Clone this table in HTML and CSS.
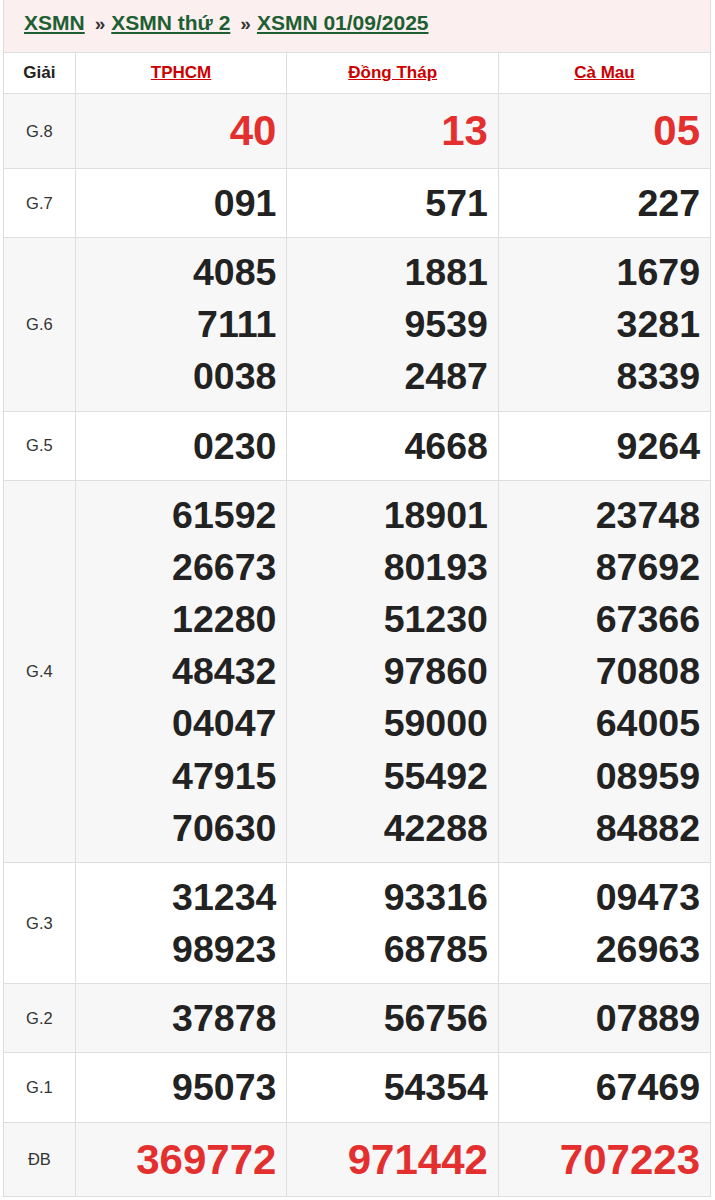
FILE: index.html
```html
<!DOCTYPE html>
<html lang="vi">
<head>
<meta charset="utf-8">
<title>XSMN 01/09/2025</title>
<link rel="stylesheet" href="styles.css">
</head>
<body>
<div class="box">
  <div class="crumbs">
    <a href="#">XSMN</a><span class="sep">»</span><a href="#">XSMN thứ 2</a><span class="sep">»</span><a href="#">XSMN 01/09/2025</a>
  </div>
  <table class="kq">
    <colgroup><col class="c-g"><col class="c-p"><col class="c-p"><col class="c-p"></colgroup>
    <thead>
      <tr><th class="lbl-h">Giải</th><th><a href="#">TPHCM</a></th><th><a href="#">Đồng Tháp</a></th><th><a href="#">Cà Mau</a></th></tr>
    </thead>
    <tbody>
      <tr class="alt"><td class="lbl">G.8</td><td class="num big red"><div>40</div></td><td class="num big red"><div>13</div></td><td class="num big red"><div>05</div></td></tr>
      <tr><td class="lbl">G.7</td><td class="num"><div>091</div></td><td class="num"><div>571</div></td><td class="num"><div>227</div></td></tr>
      <tr class="alt"><td class="lbl">G.6</td><td class="num"><div>4085</div><div>7111</div><div>0038</div></td><td class="num"><div>1881</div><div>9539</div><div>2487</div></td><td class="num"><div>1679</div><div>3281</div><div>8339</div></td></tr>
      <tr><td class="lbl">G.5</td><td class="num"><div>0230</div></td><td class="num"><div>4668</div></td><td class="num"><div>9264</div></td></tr>
      <tr class="alt"><td class="lbl">G.4</td>
        <td class="num"><div>61592</div><div>26673</div><div>12280</div><div>48432</div><div>04047</div><div>47915</div><div>70630</div></td>
        <td class="num"><div>18901</div><div>80193</div><div>51230</div><div>97860</div><div>59000</div><div>55492</div><div>42288</div></td>
        <td class="num"><div>23748</div><div>87692</div><div>67366</div><div>70808</div><div>64005</div><div>08959</div><div>84882</div></td></tr>
      <tr><td class="lbl">G.3</td><td class="num"><div>31234</div><div>98923</div></td><td class="num"><div>93316</div><div>68785</div></td><td class="num"><div>09473</div><div>26963</div></td></tr>
      <tr class="alt"><td class="lbl">G.2</td><td class="num"><div>37878</div></td><td class="num"><div>56756</div></td><td class="num"><div>07889</div></td></tr>
      <tr><td class="lbl">G.1</td><td class="num"><div>95073</div></td><td class="num"><div>54354</div></td><td class="num"><div>67469</div></td></tr>
      <tr class="alt last"><td class="lbl">ĐB</td><td class="num big red"><div>369772</div></td><td class="num big red"><div>971442</div></td><td class="num big red"><div>707223</div></td></tr>
    </tbody>
  </table>
</div>
</body>
</html>
```

FILE: styles.css
```css
html, body {
  margin: 0;
  padding: 0;
  background: #fff;
  font-family: "Liberation Sans", Arial, sans-serif;
  color: #222;
}
.box {
  margin: 0 4px 0 3px;
  border-left: 1px solid #dcdcdc;
  border-right: 1px solid #dcdcdc;
}
.crumbs {
  background: #fcefef;
  height: 52px;
  box-sizing: border-box;
  padding: 10px 0 0 20px;
  font-size: 21px;
  font-weight: bold;
  line-height: 26px;
}
.crumbs a {
  color: #1d5e32;
  text-decoration: underline;
}
.crumbs .sep {
  color: #333;
  margin: 0 6px 0 10px;
  font-size: 19px;
}
.kq {
  width: 100%;
  border-collapse: collapse;
  table-layout: fixed;
}
.c-g { width: 10.1%; }
.c-p { width: 29.97%; }
.kq th, .kq td {
  border: 1px solid #dedede;
}
.kq tr th:first-child, .kq tr td:first-child { border-left: none; }
.kq tr th:last-child, .kq tr td:last-child { border-right: none; }
.kq th {
  font-size: 17px;
  font-weight: bold;
  line-height: 24px;
  padding: 8px 4px;
  text-align: center;
}
.kq th a { color: #cc0000; text-decoration: underline; }
.kq th.lbl-h { color: #222; }
.alt td { background: #f7f7f7; }
.lbl {
  text-align: center;
  font-size: 16.5px;
  color: #333;
  padding: 0;
}
.num {
  text-align: right;
  padding: 8px 10px;
  font-weight: bold;
  font-size: 37.5px;
  line-height: 52.15px;
  color: #222;
}
.num.big {
  font-size: 42px;
  line-height: 58px;
}
.last .num.big { line-height: 57px; }
.num.red { color: #e3302f; }
```
